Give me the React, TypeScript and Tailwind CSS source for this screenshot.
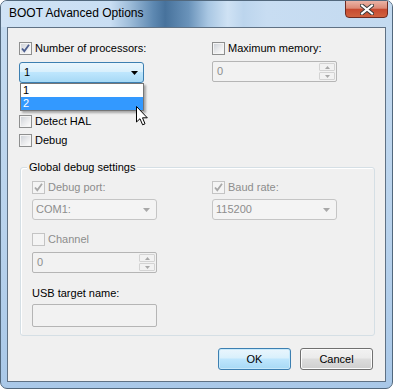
import React from "react";

const font = "font-['Liberation_Sans',Arial,sans-serif]";

function Check({ checked = false, disabled = false }: { checked?: boolean; disabled?: boolean }) {
  return (
    <span
      className={`relative flex w-[13px] h-[13px] shrink-0 border ${
        disabled ? "border-[#c4c4c4] bg-[#f4f4f4]" : "border-[#8e8f8f] bg-[#f4f4f4]"
      }`}
    >
      <span
        className={`absolute inset-[1px] ${
          disabled
            ? "bg-[#f4f4f4]"
            : "bg-[linear-gradient(135deg,#cfd3d9_0%,#e8e9eb_50%,#fbfbfb_100%)]"
        }`}
      />
      {checked && (
        <svg className="absolute inset-0" width="11" height="11" viewBox="0 0 11 11">
          <path
            d="M2 5.5 L4.3 8.2 L9 1.8"
            fill="none"
            stroke={disabled ? "#a8a8a8" : "#4d5f8f"}
            strokeWidth="1.8"
          />
        </svg>
      )}
    </span>
  );
}

function CheckRow({
  label,
  checked,
  disabled,
}: {
  label: string;
  checked?: boolean;
  disabled?: boolean;
}) {
  return (
    <div className="flex items-center h-[13px] gap-[3px]">
      <Check checked={checked} disabled={disabled} />
      <span className={`leading-[13px] ${disabled ? "text-[#8d8d8d]" : "text-black"}`}>{label}</span>
    </div>
  );
}

function ComboDisabled({ value }: { value: string }) {
  return (
    <div className="flex items-center justify-between w-[125px] h-[21px] rounded-[3px] border border-[#c5c5c5] bg-[#f4f4f4] pl-[3px] pr-[6px]">
      <span className="text-[#8d8d8d]">{value}</span>
      <svg width="7" height="4" viewBox="0 0 7 4">
        <path d="M0 0 H7 L3.5 4 Z" fill="#a8a8a8" />
      </svg>
    </div>
  );
}

function SpinDisabled({ value }: { value: string }) {
  return (
    <div className="flex w-[125px] h-[21px] border border-[#b5b5b5] rounded-[2px] bg-[#f2f2f2]">
      <span className="flex-1 flex items-center pl-[4px] text-[#8d8d8d]">{value}</span>
      <div className="flex flex-col w-[18px] gap-[1px] p-[1px]">
        <div className="flex-1 flex items-center justify-center border border-[#d3d3d3] rounded-[1px]">
          <svg width="5" height="3" viewBox="0 0 5 3">
            <path d="M0 3 H5 L2.5 0 Z" fill="#a8a8a8" />
          </svg>
        </div>
        <div className="flex-1 flex items-center justify-center border border-[#d3d3d3] rounded-[1px]">
          <svg width="5" height="3" viewBox="0 0 5 3">
            <path d="M0 0 H5 L2.5 3 Z" fill="#a8a8a8" />
          </svg>
        </div>
      </div>
    </div>
  );
}

function Cursor() {
  return (
    <svg width="13" height="20" viewBox="0 0 13 20">
      <path
        d="M0.5 0.5 V16 L4 12.7 L6.6 18.8 L9 17.8 L6.5 11.8 L11.3 11.8 Z"
        fill="#fff"
        stroke="#000"
        strokeWidth="1"
        strokeLinejoin="round"
      />
    </svg>
  );
}

export default function App() {
  return (
    <div className={`w-[393px] h-[389px] ${font} text-[11px]`}>
      <div className="flex flex-col w-full h-full rounded-[7px] border border-[#52687d] bg-[linear-gradient(180deg,#c6dcf1_0%,#b8d2ec_60%,#a9c8e8_100%)] overflow-hidden">
        {/* Title bar */}
        <div className="flex items-start h-[26px] shrink-0 bg-[linear-gradient(90deg,#d0e3f5_0%,#c9def3_28%,#9dbcd9_33%,#5d88b1_39%,#47729c_42%,#6a93ba_48%,#a9c7e3_53%,#cfe2f4_58%,#bcd5ed_62%,#c8ddf2_68%,#c3daf0_100%)]">
          <span className="pl-[8px] pt-[5px] text-[12px] leading-[15px] text-black">BOOT Advanced Options</span>
          <div className="ml-auto mr-[4px] -mt-[1px] flex items-center justify-center w-[43px] h-[18px] rounded-b-[4px] border border-[#6e2b22] bg-[linear-gradient(180deg,#eab3a6_0%,#dc8a76_45%,#c74a30_52%,#d0623f_100%)]">
            <svg width="14" height="11" viewBox="0 0 14 11">
              <path
                d="M2 1.5 L12 9.5 M12 1.5 L2 9.5"
                stroke="#3b3b3b"
                strokeWidth="4"
                strokeLinecap="square"
              />
              <path
                d="M2 1.5 L12 9.5 M12 1.5 L2 9.5"
                stroke="#ffffff"
                strokeWidth="2"
                strokeLinecap="square"
              />
            </svg>
          </div>
        </div>

        {/* Client area */}
        <div className="flex-1 mx-[6px] mb-[6px] border border-[#5f7184] bg-[#f0f0f0] flex flex-col pl-[11px] pr-[12px] pt-[14px]">
          <div className="flex">
            <div className="w-[193px] flex flex-col">
              <CheckRow label="Number of processors:" checked />
              <div className="relative mt-[7px]">
                <div className="flex items-center justify-between w-[125px] h-[21px] rounded-[3px] border border-[#3c7fb1] bg-[linear-gradient(180deg,#eaf6fd_0%,#d9f0fc_45%,#bee6fd_50%,#a7d9f5_100%)] pl-[4px] pr-[5px]">
                  <span>1</span>
                  <svg width="7" height="4" viewBox="0 0 7 4">
                    <path d="M0 0 H7 L3.5 4 Z" fill="#000" />
                  </svg>
                </div>
                <div className="absolute left-[1px] top-[21px] w-[124px] flex flex-col border border-[#767676] bg-white shadow-[2px_2px_2px_rgba(0,0,0,0.3)]">
                  <div className="h-[13px] leading-[13px] pl-[2px]">1</div>
                  <div className="h-[13px] leading-[13px] pl-[2px] bg-[#3399ff] text-white">2</div>
                  <div className="absolute left-[115px] top-[22px]">
                    <Cursor />
                  </div>
                </div>
              </div>
              <div className="mt-[32px]">
                <CheckRow label="Detect HAL" />
              </div>
              <div className="mt-[6px]">
                <CheckRow label="Debug" />
              </div>
            </div>
            <div className="flex flex-col">
              <CheckRow label="Maximum memory:" />
              <div className="mt-[6px]">
                <SpinDisabled value="0" />
              </div>
            </div>
          </div>

          {/* Group box */}
          <div className="relative mt-[20px] ml-[1px] w-[355px] h-[169px] shrink-0 rounded-[3px] border border-[#d5dfe5] shadow-[inset_1px_1px_0_#fff] flex flex-col pl-[11px] pt-[13px]">
            <span className="absolute left-[6px] -top-[8px] px-[2px] bg-[#f0f0f0] leading-[15px] text-black">
              Global debug settings
            </span>
            <div className="flex">
              <div className="w-[180px] flex flex-col">
                <CheckRow label="Debug port:" checked disabled />
                <div className="mt-[5px]">
                  <ComboDisabled value="COM1:" />
                </div>
                <div className="mt-[13px]">
                  <CheckRow label="Channel" disabled />
                </div>
                <div className="mt-[6px]">
                  <SpinDisabled value="0" />
                </div>
                <div className="mt-[13px] leading-[15px] text-black">USB target name:</div>
                <div className="mt-[3px] w-[125px] h-[23px] border border-[#b5b5b5] rounded-[2px] bg-[#f2f2f2]" />
              </div>
              <div className="flex flex-col">
                <CheckRow label="Baud rate:" checked disabled />
                <div className="mt-[5px]">
                  <ComboDisabled value="115200" />
                </div>
              </div>
            </div>
          </div>

          {/* Buttons */}
          <div className="flex justify-end gap-[9px] mt-[12px]">
            <button className="w-[73px] h-[22px] rounded-[3px] border border-[#3c7fb1] bg-[linear-gradient(180deg,#eaf6fd_0%,#d9f0fc_45%,#bee6fd_50%,#a7d9f5_100%)] shadow-[inset_0_0_0_1px_#c7e9fb] text-black">
              OK
            </button>
            <button className="w-[73px] h-[22px] rounded-[3px] border border-[#707070] bg-[linear-gradient(180deg,#f2f2f2_0%,#ebebeb_45%,#dddddd_50%,#cfcfcf_100%)] shadow-[inset_0_0_0_1px_#fcfcfc] text-black">
              Cancel
            </button>
          </div>
        </div>
      </div>
    </div>
  );
}
